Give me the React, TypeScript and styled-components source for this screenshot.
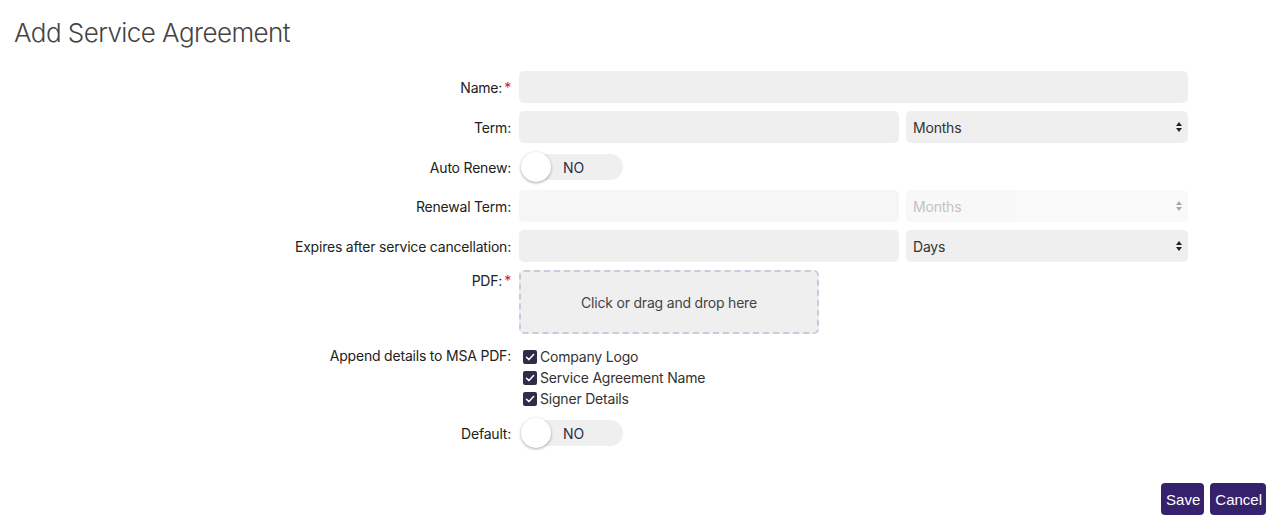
import React from 'react';
import styled, { createGlobalStyle } from 'styled-components';

const GlobalStyle = createGlobalStyle`
	html, body {
		margin: 0;
		padding: 0;
		background: #fff;
	}
	body {
		font-family: Inter, "Noto Sans", sans-serif;
		color: #222;
	}
	* {
		box-sizing: border-box;
	}
`;

const Page = styled.div`
	width: 1280px;
	height: 529px;
	padding: 16px 14px 14px 14px;
	display: flex;
	flex-direction: column;
`;

const Title = styled.h1`
	margin: 0;
	font-size: 26px;
	line-height: 34px;
	font-weight: 300;
	color: #444;
	letter-spacing: -0.55px;
`;

const Form = styled.form`
	margin-top: 21px;
	display: flex;
	flex-direction: column;
	gap: 8px;
`;

const Row = styled.div<{ $top?: boolean; $gap?: number }>`
	display: grid;
	grid-template-columns: 497px 669px;
	column-gap: 8px;
	align-items: ${(p) => (p.$top ? 'start' : 'center')};
	margin-top: ${(p) => p.$gap || 0}px;
`;

const Label = styled.label<{ $offset?: number }>`
	text-align: right;
	font-size: 14px;
	line-height: 20px;
	color: #222;
	letter-spacing: -0.2px;
	padding-top: ${(p) => p.$offset || 0}px;
	white-space: nowrap;
	position: relative;
	top: ${(p) => (p.$offset === undefined ? 1 : 0)}px;
`;

const Required = styled.span`
	color: #e0131b;
	margin-left: 2px;
`;

const TextInput = styled.input`
	height: 32px;
	width: 100%;
	border: none;
	border-radius: 5px;
	background: ${(p) => (p.disabled ? '#f6f6f6' : '#efefef')};
	padding: 0 8px;
	font: inherit;
	font-size: 14px;
	outline: none;
`;

const Split = styled.div`
	display: grid;
	grid-template-columns: 380px 282px;
	column-gap: 7px;
`;

const SelectWrap = styled.div`
	position: relative;
	height: 32px;
`;

const Select = styled.select`
	appearance: none;
	-webkit-appearance: none;
	width: 100%;
	height: 32px;
	border: none;
	border-radius: 5px;
	background: ${(p) => (p.disabled ? '#f6f6f6' : '#efefef')};
	color: ${(p) => (p.disabled ? '#a8a8a8' : '#333')};
	padding: 0 7px;
	font: inherit;
	font-size: 14px;
	letter-spacing: -0.2px;
	outline: none;
`;

const Arrow = styled.svg<{ $dim?: boolean }>`
	position: absolute;
	right: 6px;
	top: 11px;
	width: 6px;
	height: 10px;
	fill: ${(p) => (p.$dim ? '#aaa' : '#222')};
	pointer-events: none;
`;

const Toggle = styled.div`
	position: relative;
	width: 101px;
	height: 26px;
	margin: 3px 0 2px 3px;
	border-radius: 13px;
	background: #efefef;
	display: flex;
	align-items: center;
	padding-left: 41px;
	font-size: 14px;
	color: #2c2b4a;
`;

const Knob = styled.span`
	position: absolute;
	left: -1px;
	top: -2px;
	width: 30px;
	height: 30px;
	border-radius: 50%;
	background: #fff;
	box-shadow: 0 1px 3px rgba(0, 0, 0, 0.35);
`;

const DropZone = styled.div`
	width: 300px;
	height: 64px;
	border: 2px dashed #cdc9dd;
	border-radius: 5px;
	background: #efefef;
	display: flex;
	align-items: center;
	justify-content: center;
	font-size: 14px;
	letter-spacing: -0.2px;
	color: #444;
`;

const CheckList = styled.div`
	display: flex;
	flex-direction: column;
`;

const CheckRow = styled.label`
	display: flex;
	align-items: center;
	gap: 3px;
	height: 21px;
	padding-left: 4px;
	font-size: 14px;
	letter-spacing: -0.2px;
	color: #333;
`;

const Box = styled.span`
	width: 14px;
	height: 14px;
	border-radius: 2px;
	background: #2e2c49;
	display: flex;
	align-items: center;
	justify-content: center;
`;

const Footer = styled.div`
	margin-top: auto;
	display: flex;
	justify-content: flex-end;
	gap: 6px;
`;

const Button = styled.button`
	height: 32px;
	padding: 0 4px 0 5px;
	border: none;
	border-radius: 4px;
	background: #36226c;
	color: #fff;
	font-family: "Liberation Sans", Arial, sans-serif;
	font-size: 15px;
`;

const SelectField = ({ value, disabled }: { value: string; disabled?: boolean }) => (
	<SelectWrap>
		<Select disabled={disabled} defaultValue={value}>
			<option>{value}</option>
		</Select>
		<Arrow viewBox="0 0 6 10" $dim={disabled}>
			<path d="M3 0 L6 4 H0 Z M0 6 H6 L3 10 Z" />
		</Arrow>
	</SelectWrap>
);

const Switch = () => (
	<Toggle>
		<Knob />
		NO
	</Toggle>
);

const Check = ({ text }: { text: string }) => (
	<CheckRow>
		<Box>
			<svg width="10" height="10" viewBox="0 0 10 10">
				<path d="M1.5 5.2 L4 7.6 L8.6 2.6" fill="none" stroke="#fff" strokeWidth="1.5" strokeLinecap="round" strokeLinejoin="round" />
			</svg>
		</Box>
		{text}
	</CheckRow>
);

export default function App() {
	return (
		<>
			<GlobalStyle />
			<Page>
				<Title>Add Service Agreement</Title>
				<Form>
					<Row>
						<Label>
							Name:<Required>*</Required>
						</Label>
						<TextInput />
					</Row>
					<Row>
						<Label>Term:</Label>
						<Split>
							<TextInput />
							<SelectField value="Months" />
						</Split>
					</Row>
					<Row>
						<Label>Auto Renew:</Label>
						<Switch />
					</Row>
					<Row>
						<Label>Renewal Term:</Label>
						<Split>
							<TextInput disabled />
							<SelectField value="Months" disabled />
						</Split>
					</Row>
					<Row>
						<Label>Expires after service cancellation:</Label>
						<Split>
							<TextInput />
							<SelectField value="Days" />
						</Split>
					</Row>
					<Row $top>
						<Label $offset={1}>
							PDF:<Required>*</Required>
						</Label>
						<DropZone>Click or drag and drop here</DropZone>
					</Row>
					<Row $top $gap={4}>
						<Label $offset={0}>Append details to MSA PDF:</Label>
						<CheckList>
							<Check text="Company Logo" />
							<Check text="Service Agreement Name" />
							<Check text="Signer Details" />
						</CheckList>
					</Row>
					<Row>
						<Label>Default:</Label>
						<Switch />
					</Row>
				</Form>
				<Footer>
					<Button type="button">Save</Button>
					<Button type="button">Cancel</Button>
				</Footer>
			</Page>
		</>
	);
}
